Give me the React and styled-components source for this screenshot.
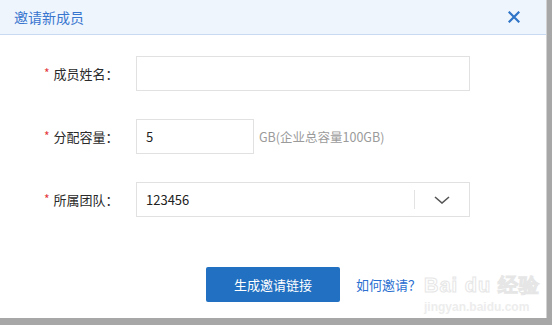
import React from "react";
import styled, { createGlobalStyle } from "styled-components";

const GlobalStyle = createGlobalStyle`
  html, body {
    margin: 0;
    padding: 0;
    background: #a7a7a7;
    font-family: "Noto Sans CJK SC", "Noto Sans", "Liberation Sans", sans-serif;
  }
`;

const Dialog = styled.div`
  position: relative;
  width: 547px;
  height: 318px;
  background: #fff;
  border-right: 1px solid #d2d2d2;
  box-sizing: border-box;
  display: flex;
  flex-direction: column;
`;

const Header = styled.div`
  height: 34px;
  background: #eff5fd;
  border-bottom: 1px solid #c8daf2;
  display: flex;
  align-items: center;
  justify-content: space-between;
  padding: 0 26px 0 14px;
`;

const Title = styled.span`
  font-size: 14px;
  color: #3876cf;
  line-height: 1;
`;

const Close = styled.button`
  border: none;
  background: none;
  padding: 0;
  width: 12px;
  height: 12px;
  display: flex;
  cursor: pointer;
`;

const Body = styled.div`
  padding-top: 21px;
  display: flex;
  flex-direction: column;
  gap: 28px;
`;

const Row = styled.div`
  display: flex;
  align-items: center;
  height: 35px;
`;

const Label = styled.label`
  width: 136px;
  padding-left: 44px;
  box-sizing: border-box;
  font-size: 13px;
  color: #2a2a2a;
  display: flex;
  align-items: center;
`;

const Star = styled.span`
  color: #e4393c;
  font-size: 12px;
  margin-right: 4px;
  position: relative;
  top: -1px;
`;

const Input = styled.div`
  width: ${(p) => p.w}px;
  height: 35px;
  box-sizing: border-box;
  border: 1px solid #e1e1e1;
  display: flex;
  align-items: center;
  padding-left: 9px;
  font-size: 13px;
  color: #222;
`;

const Hint = styled.span`
  margin-left: 5px;
  font-size: 12.5px;
  color: #9b9b9b;
`;

const SelectText = styled.span`
  flex: 1;
`;

const Divider = styled.span`
  width: 1px;
  height: 19px;
  background: #e3e3e3;
`;

const Arrow = styled.span`
  width: 54px;
  display: flex;
  justify-content: center;
  align-items: center;
`;

const Footer = styled.div`
  margin-top: 50px;
  padding-left: 206px;
  display: flex;
  align-items: center;
  gap: 16px;
`;

const Primary = styled.button`
  width: 134px;
  height: 35px;
  border: none;
  border-radius: 2px;
  background: #2170c1;
  color: #fff;
  font-family: inherit;
  font-size: 13px;
  cursor: pointer;
`;

const Link = styled.a`
  font-size: 13px;
  color: #2b6fd1;
  text-decoration: none;
`;

const Watermark = styled.div`
  position: absolute;
  left: 424px;
  top: 275px;
  font-family: "Liberation Sans", sans-serif;
  pointer-events: none;
  line-height: 1;
`;

const MarkTop = styled.div`
  font-size: 20px;
  font-weight: bold;
  letter-spacing: 1px;
  -webkit-text-stroke: 1px #e6e6e6;
  color: #fff;
`;

const MarkBottom = styled.div`
  margin-top: 6px;
  font-size: 12px;
  font-weight: bold;
  color: #ededed;
`;

export default function App() {
  return (
    <>
      <GlobalStyle />
      <Dialog>
        <Header>
          <Title>邀请新成员</Title>
          <Close aria-label="close">
            <svg width="12" height="12" viewBox="0 0 12 12">
              <path d="M1.5 1.5 L10.5 10.5 M10.5 1.5 L1.5 10.5" stroke="#2e74c7" strokeWidth="2.2" strokeLinecap="square" />
            </svg>
          </Close>
        </Header>
        <Body>
          <Row>
            <Label><Star>*</Star>成员姓名：</Label>
            <Input w={334} />
          </Row>
          <Row>
            <Label><Star>*</Star>分配容量：</Label>
            <Input w={118}>5</Input>
            <Hint>GB(企业总容量100GB)</Hint>
          </Row>
          <Row>
            <Label><Star>*</Star>所属团队：</Label>
            <Input w={334}>
              <SelectText>123456</SelectText>
              <Divider />
              <Arrow>
                <svg width="16" height="8" viewBox="0 0 16 8">
                  <path d="M1 1 L8 7 L15 1" fill="none" stroke="#555" strokeWidth="1.6" />
                </svg>
              </Arrow>
            </Input>
          </Row>
        </Body>
        <Footer>
          <Primary>生成邀请链接</Primary>
          <Link href="#">如何邀请？</Link>
        </Footer>
        <Watermark>
          <MarkTop>Bai du 经验</MarkTop>
          <MarkBottom>jingyan.baidu.com</MarkBottom>
        </Watermark>
      </Dialog>
    </>
  );
}
